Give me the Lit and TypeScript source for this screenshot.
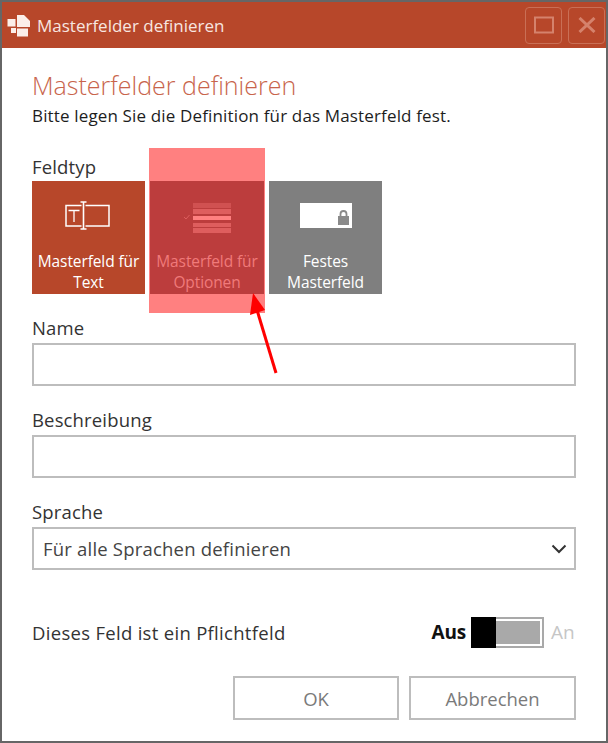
import { LitElement, html, css } from "lit";
import { customElement } from "lit/decorators.js";

@customElement("app-root")
export class AppRoot extends LitElement {
  static styles = css`
    :host { display: block; width: 608px; height: 743px; font-family: "Open Sans", "Noto Sans", "Liberation Sans", sans-serif; color: #222; }
    * { box-sizing: border-box; }
    .win { position: relative; width: 608px; height: 743px; background: #fff; border: 2px solid #666; display: flex; flex-direction: column; overflow: hidden; }
    .bar { height: 46px; flex: none; background: #b7472a; display: flex; align-items: center; padding: 0 1px 0 4px; color: #fff; }
    .logo { width: 26px; height: 26px; flex: none; }
    .bar-title { margin-left: 5px; font-size: 17px; color: #f7e6e0; flex: 1; }
    .wbtn { width: 37px; height: 37px; border: 1.5px solid #c96f56; border-radius: 4px; margin-left: 6px; display: flex; align-items: center; justify-content: center; }
    .wbtn svg { display: block; }
    .body { padding: 0 30px; flex: 1; display: flex; flex-direction: column; }
    h1 { margin: 21px 0 0; font-weight: 300; font-size: 25px; line-height: 32px; color: #c8644b; }
    .sub { font-size: 17px; line-height: 20px; letter-spacing: 0.15px; margin-top: 5px; color: #1d1d1d; }
    .label { font-size: 18.5px; line-height: 22px; letter-spacing: 0.15px; color: #333; }
    .tl { margin-top: 30px; height: 25px; }
    .tiles { display: flex; gap: 5px; height: 113px; }
    .tile { width: 113px; height: 113px; flex: none; background: #b7472a; color: #fff; display: flex; flex-direction: column; align-items: center; }
    .tile.mid { width: 114px; background: #bc3d3d; color: #f07a7a; position: relative; z-index: 1; }
    .tile.grey { background: #7f7f7f; }
    .tile svg { margin-top: 18px; height: 36px; flex: none; display: block; }
    .tile span { margin-top: 16px; font-size: 15.5px; line-height: 21px; letter-spacing: -0.1px; text-align: center; white-space: nowrap; }
    .fl { margin-top: 23px; height: 26px; }
    .input { height: 43px; border: 2px solid #bdbdbd; background: #fff; display: flex; align-items: center; padding: 0 9px; }
    .sel { justify-content: space-between; font-size: 18.5px; letter-spacing: 0.2px; color: #444; padding-right: 7px; }
    .req { margin-top: 46px; height: 32px; display: flex; align-items: center; font-size: 18.5px; letter-spacing: 0.3px; color: #333; }
    .req .grow { flex: 1; }
    .aus { font-weight: 700; font-size: 19px; color: #111; letter-spacing: -0.2px; margin-right: 5px; }
    .tog { width: 73px; height: 31px; border: 2px solid #a9a9a9; position: relative; padding: 2px; background: #fff; margin-right: 7px; }
    .tog::before { content: ""; display: block; height: 100%; background: #a9a9a9; }
    .knob { position: absolute; left: -2px; top: -2px; width: 25px; height: 31px; background: #000; }
    .an { color: #c6c6c6; font-size: 19px; letter-spacing: 0; width: 25px; white-space: nowrap; }
    .actions { margin-top: 28px; display: flex; justify-content: flex-end; gap: 10px; }
    .btn { height: 44px; width: 167px; border: 2px solid #bdbdbd; background: #fff; color: #7a7a7a; font-size: 18.5px; font-family: inherit; padding: 0; }
    .btn.ok { width: 166px; }
    .hl { position: absolute; left: 147px; top: 146px; width: 116px; height: 165px; background: #ff8080; }
    .arrow { position: absolute; left: 240px; top: 280px; width: 50px; height: 100px; z-index: 2; }
  `;

  render() {
    return html`<div class="win">
      <div class="bar">
        <svg class="logo" viewBox="0 0 26 26" fill="#fbeee9">
          <rect x="1.5" y="7" width="8" height="7.5"/>
          <rect x="5" y="16" width="5" height="5"/>
          <rect x="11" y="16.5" width="11" height="8"/>
          <path d="M11 3h7l6 6v6H11z"/>
        </svg>
        <div class="bar-title">Masterfelder definieren</div>
        <div class="wbtn"><svg width="20" height="18" viewBox="0 0 20 18"><rect x="1" y="1.5" width="18" height="15" fill="none" stroke="#d5826c" stroke-width="2"/></svg></div>
        <div class="wbtn"><svg width="18" height="16" viewBox="0 0 18 16"><path d="M1.5 1l15 14M16.5 1L1.5 15" fill="none" stroke="#d5826c" stroke-width="3"/></svg></div>
      </div>
      <div class="body">
        <h1>Masterfelder definieren</h1>
        <div class="sub">Bitte legen Sie die Definition für das Masterfeld fest.</div>
        <div class="label tl">Feldtyp</div>
        <div class="tiles">
          <div class="tile">
            <svg width="48" height="36" viewBox="0 0 48 36" fill="none" stroke="#fff">
              <path d="M16.500 6.500H1v20.500h15.500M20.500 6.500H44V27H20.500" stroke-width="1.500"/>
              <path d="M18.500 3.500v26M15.500 3h6M15.500 30h6" stroke-width="1.600"/>
              <path d="M3.500 11.500h11M9 11.500V23" stroke-width="1.300"/>
            </svg>
            <span>Masterfeld für<br />Text</span>
          </div>
          <div class="tile mid">
            <svg width="50" height="36" viewBox="0 0 50 36" fill="#ff8080">
              <rect x="11" y="4" width="38" height="5" opacity=".3"/>
              <rect x="11" y="10" width="38" height="5" opacity=".5"/>
              <rect x="11" y="17" width="38" height="4"/>
              <rect x="11" y="24" width="38" height="4" opacity=".5"/>
              <rect x="11" y="29" width="38" height="5" opacity=".5"/>
              <path d="M2 18l2 2 3.500-4" fill="none" stroke="#ff8080" stroke-width=".8" opacity=".6"/>
            </svg>
            <span>Masterfeld für<br />Optionen</span>
          </div>
          <div class="tile grey">
            <svg width="52" height="36" viewBox="0 0 52 36">
              <rect x="0" y="4" width="52" height="25" fill="#fff"/>
              <rect x="38" y="17" width="11" height="9" fill="#8a8a8a"/>
              <path d="M40.500 17v-2a3 3 0 0 1 6 0v2" fill="none" stroke="#8a8a8a" stroke-width="1.800"/>
            </svg>
            <span>Festes<br />Masterfeld</span>
          </div>
        </div>
        <div class="label fl">Name</div>
        <div class="input"></div>
        <div class="label fl">Beschreibung</div>
        <div class="input"></div>
        <div class="label fl">Sprache</div>
        <div class="input sel">
          <span>Für alle Sprachen definieren</span>
          <svg width="16" height="10" viewBox="0 0 16 10"><path d="M1.500 1.500L8 8l6.500-6.500" fill="none" stroke="#333" stroke-width="2"/></svg>
        </div>
        <div class="req">
          <span>Dieses Feld ist ein Pflichtfeld</span>
          <span class="grow"></span>
          <span class="aus">Aus</span>
          <div class="tog"><div class="knob"></div></div>
          <span class="an">An</span>
        </div>
        <div class="actions">
          <button class="btn ok">OK</button>
          <button class="btn">Abbrechen</button>
        </div>
      </div>
      <div class="hl"></div>
      <svg class="arrow" viewBox="0 0 50 100">
        <path d="M34 91L15 28" stroke="#f00" stroke-width="3" fill="none"/>
        <path d="M11 11L8 33l15-5z" fill="#f00"/>
      </svg>
    </div>`;
  }
}
